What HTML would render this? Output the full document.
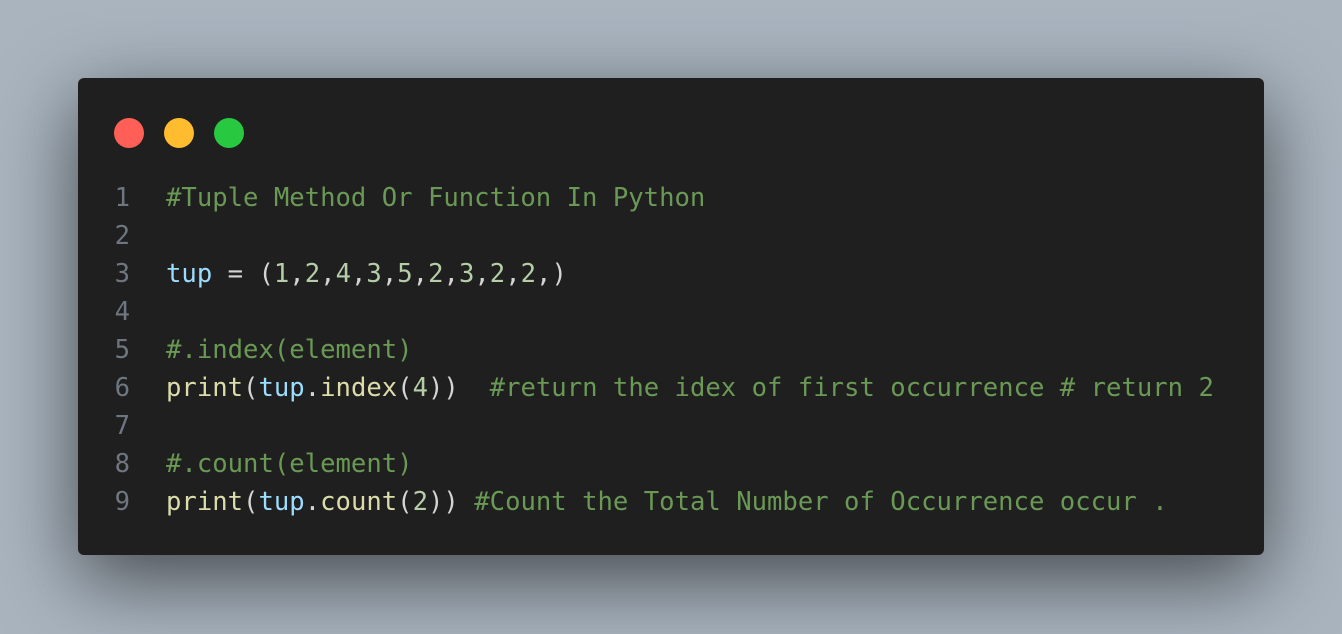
<!DOCTYPE html>
<html><head><meta charset="utf-8"><style>
html,body{margin:0;padding:0;width:1342px;height:634px;overflow:hidden;background:#a9b4bf;}
.win{position:absolute;left:78px;top:78px;width:1186px;height:477px;background:#1f1f1f;border-radius:6px;box-shadow:0 24px 80px rgba(0,0,0,0.6);}
.dot{position:absolute;top:40px;width:30px;height:30px;border-radius:50%;}
.code{position:absolute;left:0;top:101px;font-family:"DejaVu Sans Mono","Liberation Mono",monospace;font-size:25.6px;line-height:38px;white-space:pre;color:#d4d4d4;}
.ln{display:inline-block;width:52px;text-align:right;color:#6e7681;margin-right:36px;}
.c{color:#6a9955}.v{color:#9cdcfe}.f{color:#dcdcaa}.n{color:#b5cea8}
</style></head><body>
<div class="win">
<div class="dot" style="left:36px;background:#ff5f57"></div>
<div class="dot" style="left:86px;background:#febc2e"></div>
<div class="dot" style="left:136px;background:#28c840"></div>
<div class="code"><div><span class="ln">1</span><span class="c">#Tuple Method Or Function In Python</span></div><div><span class="ln">2</span></div><div><span class="ln">3</span><span class="v">tup</span> = (<span class="n">1</span>,<span class="n">2</span>,<span class="n">4</span>,<span class="n">3</span>,<span class="n">5</span>,<span class="n">2</span>,<span class="n">3</span>,<span class="n">2</span>,<span class="n">2</span>,)</div><div><span class="ln">4</span></div><div><span class="ln">5</span><span class="c">#.index(element)</span></div><div><span class="ln">6</span><span class="f">print</span>(<span class="v">tup</span>.<span class="f">index</span>(<span class="n">4</span>))  <span class="c">#return the idex of first occurrence # return 2</span></div><div><span class="ln">7</span></div><div><span class="ln">8</span><span class="c">#.count(element)</span></div><div><span class="ln">9</span><span class="f">print</span>(<span class="v">tup</span>.<span class="f">count</span>(<span class="n">2</span>)) <span class="c">#Count the Total Number of Occurrence occur .</span></div></div>
</div>
</body></html>
